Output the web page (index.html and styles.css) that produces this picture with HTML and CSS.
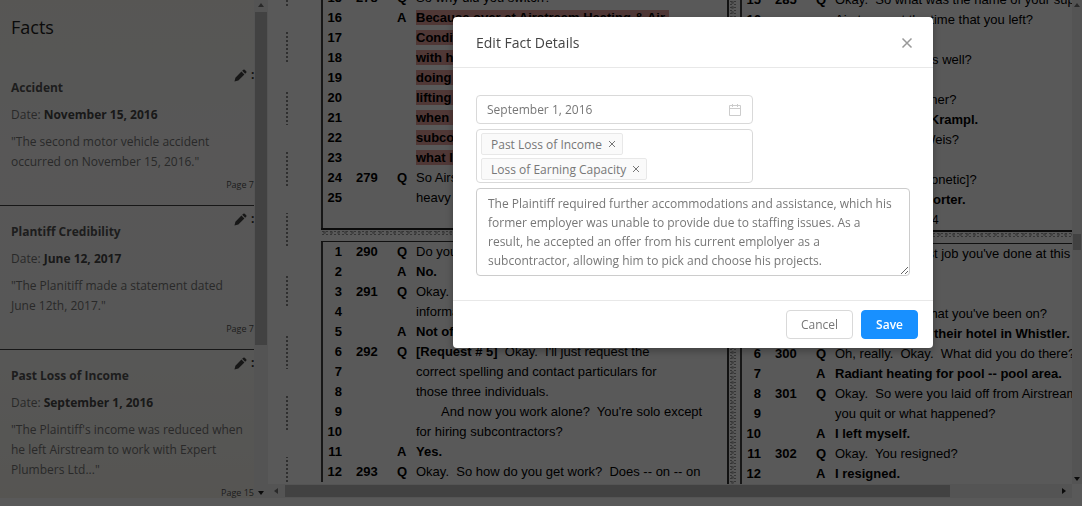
FILE: index.html
```
<!DOCTYPE html>
<html lang="en">

<head>
    <meta charset="UTF-8">
    <meta name="viewport" content="width=device-width, initial-scale=1.0">
    <title>Edit Fact Details</title>
    <link rel="stylesheet" href="styles.css">
</head>

<body>
    <svg class="sprite" aria-hidden="true">
        <symbol id="pencil" viewBox="0 0 14 14">
            <path d="M.5 13.500l1-4.200 6.500-6.500 3.200 3.200-6.500 6.500zM8.800 2l1.200-1.200q.8-.6 1.500 0l1.700 1.700q.6.8 0 1.500L12 5.200z" />
        </symbol>
    </svg>

    <div class="app">
        <!-- Facts list -->
        <aside class="sidebar">
            <h1>Facts</h1>
            <article class="fact">
                <div class="fact-actions">
                    <button aria-label="Edit fact"><svg><use href="#pencil" /></svg></button>
                    <span class="more">:</span>
                </div>
                <h2>Accident</h2>
                <p>Date: <b>November 15, 2016</b></p>
                <p class="quote">"The second motor vehicle accident occurred on November 15, 2016."</p>
                <div class="page-ref">Page 7</div>
            </article>
            <article class="fact">
                <div class="fact-actions">
                    <button aria-label="Edit fact"><svg><use href="#pencil" /></svg></button>
                    <span class="more">:</span>
                </div>
                <h2>Plantiff Credibility</h2>
                <p>Date: <b>June 12, 2017</b></p>
                <p class="quote">"The Planitiff made a statement dated June 12th, 2017."</p>
                <div class="page-ref">Page 7</div>
            </article>
            <article class="fact">
                <div class="fact-actions">
                    <button aria-label="Edit fact"><svg><use href="#pencil" /></svg></button>
                    <span class="more">:</span>
                </div>
                <h2>Past Loss of Income</h2>
                <p>Date: <b>September 1, 2016</b></p>
                <p class="quote">"The Plaintiff's income was reduced when he left Airstream to work with Expert Plumbers Ltd..."</p>
                <div class="page-ref">Page 15</div>
            </article>
        </aside>
        <div class="scroll-y">
            <i class="arrow up"></i>
            <div class="thumb"></div>
            <i class="arrow down"></i>
        </div>

        <!-- Transcript -->
        <main class="viewer">
            <div class="scan">
                <div class="margin"></div>
                <div class="sheet sheet-left">
                    <div class="block-end">
                        <table class="block">
                            <tr><td>15</td><td>278</td><td>Q</td><td>So why did you switch?</td></tr>
                            <tr class="answer"><td>16</td><td></td><td>A</td><td><mark>Because over at Airstream Heating &amp; Air </mark></td></tr>
                            <tr class="answer"><td>17</td><td></td><td></td><td><mark>Conditioning I was working</mark></td></tr>
                            <tr class="answer"><td>18</td><td></td><td></td><td><mark>with heavy equipment and</mark></td></tr>
                            <tr class="answer"><td>19</td><td></td><td></td><td><mark>doing a lot of the heavy</mark></td></tr>
                            <tr class="answer"><td>20</td><td></td><td></td><td><mark>lifting on my own, and</mark></td></tr>
                            <tr class="answer"><td>21</td><td></td><td></td><td><mark>when I started to work as a</mark></td></tr>
                            <tr class="answer"><td>22</td><td></td><td></td><td><mark>subcontractor I could pick</mark></td></tr>
                            <tr class="answer"><td>23</td><td></td><td></td><td><mark>what I wanted to do.</mark></td></tr>
                            <tr><td>24</td><td>279</td><td>Q</td><td>So Airstream had you doing</td></tr>
                            <tr><td>25</td><td></td><td></td><td>heavy lifting?</td></tr>
                        </table>
                        <div class="folio"></div>
                    </div>
                    <div class="grit-row"></div>
                    <table class="block block-start">
                        <tr><td>1</td><td>290</td><td>Q</td><td>Do you know their names?</td></tr>
                        <tr class="answer"><td>2</td><td></td><td>A</td><td>No.</td></tr>
                        <tr><td>3</td><td>291</td><td>Q</td><td>Okay.  Do you have contact</td></tr>
                        <tr><td>4</td><td></td><td></td><td>information for them?</td></tr>
                        <tr class="answer"><td>5</td><td></td><td>A</td><td>Not offhand.</td></tr>
                        <tr><td>6</td><td>292</td><td>Q</td><td><b>[Request # 5]</b>  Okay.  I'll just request the</td></tr>
                        <tr><td>7</td><td></td><td></td><td>correct spelling and contact particulars for</td></tr>
                        <tr><td>8</td><td></td><td></td><td>those three individuals.</td></tr>
                        <tr><td>9</td><td></td><td></td><td class="indent">And now you work alone?  You're solo except</td></tr>
                        <tr><td>10</td><td></td><td></td><td>for hiring subcontractors?</td></tr>
                        <tr class="answer"><td>11</td><td></td><td>A</td><td>Yes.</td></tr>
                        <tr><td>12</td><td>293</td><td>Q</td><td>Okay.  So how do you get work?  Does -- on -- on</td></tr>
                    </table>
                </div>
                <div class="gutter"></div>
                <div class="sheet">
                    <div class="block-end">
                        <table class="block">
                            <tr><td>15</td><td>285</td><td>Q</td><td>Okay.  So what was the name of your supervisor</td></tr>
                            <tr><td>16</td><td></td><td></td><td>Airstream at the time that you left?</td></tr>
                            <tr class="answer"><td>17</td><td></td><td>A</td><td>Kevin.</td></tr>
                            <tr><td>18</td><td>286</td><td>Q</td><td>Was Bert there as well?</td></tr>
                            <tr class="answer"><td>19</td><td></td><td>A</td><td>Yes.</td></tr>
                            <tr><td>20</td><td>287</td><td>Q</td><td>Who was the owner?</td></tr>
                            <tr class="answer"><td>21</td><td></td><td>A</td><td>I think that's it, Krampl.</td></tr>
                            <tr><td>22</td><td>288</td><td>Q</td><td>And then Mark Weis?</td></tr>
                            <tr class="answer"><td>23</td><td></td><td>A</td><td>Yes.</td></tr>
                            <tr><td>24</td><td>289</td><td>Q</td><td>Andy Krampl [phonetic]?</td></tr>
                            <tr class="answer"><td>25</td><td></td><td>A</td><td>To the court reporter.</td></tr>
                        </table>
                        <div class="folio">64</div>
                    </div>
                    <div class="grit-row"></div>
                    <table class="block block-start">
                        <tr><td>1</td><td>298</td><td>Q</td><td>What was the last job you've done at this</td></tr>
                        <tr><td>2</td><td></td><td></td><td>point?</td></tr>
                        <tr class="answer"><td>3</td><td></td><td>A</td><td>Whistler.</td></tr>
                        <tr><td>4</td><td>299</td><td>Q</td><td>Is that a big job that you've been on?</td></tr>
                        <tr class="answer"><td>5</td><td></td><td>A</td><td>No, I was out at their hotel in Whistler.</td></tr>
                        <tr><td>6</td><td>300</td><td>Q</td><td>Oh, really.  Okay.  What did you do there?</td></tr>
                        <tr class="answer"><td>7</td><td></td><td>A</td><td>Radiant heating for pool -- pool area.</td></tr>
                        <tr><td>8</td><td>301</td><td>Q</td><td>Okay.  So were you laid off from Airstream</td></tr>
                        <tr><td>9</td><td></td><td></td><td>you quit or what happened?</td></tr>
                        <tr class="answer"><td>10</td><td></td><td>A</td><td>I left myself.</td></tr>
                        <tr><td>11</td><td>302</td><td>Q</td><td>Okay.  You resigned?</td></tr>
                        <tr class="answer"><td>12</td><td></td><td>A</td><td>I resigned.</td></tr>
                    </table>
                </div>
            </div>
            <div class="scroll-y scroll-doc">
                <i class="arrow up"></i>
                <div class="thumb"></div>
                <i class="arrow down"></i>
            </div>
            <div class="scroll-x">
                <i class="arrow left"></i>
                <div class="thumb"></div>
                <i class="arrow right"></i>
            </div>
        </main>
    </div>

    <!-- Modal -->
    <div class="mask">
        <form class="modal" role="dialog" aria-labelledby="modal-title">
            <header class="modal-header">
                <h3 id="modal-title">Edit Fact Details</h3>
                <button type="button" class="close" aria-label="Close">
                    <svg viewBox="0 0 12 12"><path d="M1.500 1.500l9 9M10.500 1.500l-9 9" /></svg>
                </button>
            </header>
            <div class="modal-body">
                <div class="date-field">
                    <input type="text" aria-label="Date" value="September 1, 2016">
                    <svg viewBox="0 0 12 12"><path d="M.5 1.500h11v10H.5zM.5 4.500h11M3.500 0v3M8.500 0v3" /></svg>
                </div>
                <div class="tags">
                    <span class="tag">Past Loss of Income
                        <button type="button" aria-label="Remove Past Loss of Income"><svg viewBox="0 0 8 8"><path d="M1 1l6 6M7 1L1 7" /></svg></button>
                    </span>
                    <span class="tag">Loss of Earning Capacity
                        <button type="button" aria-label="Remove Loss of Earning Capacity"><svg viewBox="0 0 8 8"><path d="M1 1l6 6M7 1L1 7" /></svg></button>
                    </span>
                </div>
                <textarea aria-label="Description">The Plaintiff required further accommodations and assistance, which his former employer was unable to provide due to staffing issues. As a result, he accepted an offer from his current emplolyer as a subcontractor, allowing him to pick and choose his projects.</textarea>
            </div>
            <footer class="modal-footer">
                <button type="button" class="btn">Cancel</button>
                <button type="submit" class="btn btn-primary">Save</button>
            </footer>
        </form>
    </div>
</body>

</html>
```
FILE: styles.css
```
* {
    box-sizing: border-box;
}

body {
    margin: 0;
    height: 100vh;
    overflow: hidden;
    background: #fff;
    font-family: "Open Sans", "Noto Sans", sans-serif;
    font-size: 12px;
}

h1, h2, h3, p {
    margin: 0;
}

button {
    font: inherit;
    cursor: pointer;
}

.sprite {
    display: none;
}

.app {
    display: grid;
    grid-template-columns: 254px 14px 1fr;
    height: 100vh;
    padding-bottom: 8px;
}

/* Sidebar */
.sidebar {
    overflow: hidden;
    background: linear-gradient(#f8f7f1, #fbfafa 30%, #fafaf8 65%, #f5f3ec);
    color: #777;
}

.sidebar h1 {
    height: 62px;
    padding: 14px 11px;
    font-size: 18px;
    font-weight: 400;
    line-height: 26px;
    color: #222;
}

.fact {
    position: relative;
    padding: 16px 0 12px 11px;
    border-bottom: 1px solid #444;
    line-height: 20px;
}

.fact h2 {
    font-size: 12px;
    font-weight: 700;
    line-height: 20px;
    color: #555;
}

.fact p {
    margin-top: 7px;
}

.fact .quote {
    padding-right: 8px;
}

.fact b {
    color: #484848;
}

.page-ref {
    margin-top: 5px;
    font-size: 9px;
    line-height: 16px;
    text-align: right;
    color: #555;
}

.fact-actions {
    position: absolute;
    top: 6px;
    right: 0;
    display: flex;
    gap: 4px;
    align-items: center;
    color: #333;
    line-height: 14px;
}

.fact-actions button {
    display: flex;
    padding: 0;
    border: 0;
    background: none;
}

.fact-actions svg {
    width: 13px;
    height: 13px;
    fill: #444;
}

.more {
    width: 3px;
    font-weight: 700;
}

/* Scrollbars */
.scroll-y,
.scroll-x {
    display: flex;
    justify-content: space-between;
    align-items: center;
    background: #f1f1f1;
}

.scroll-y {
    flex-direction: column;
    padding: 3px 1px;
}

.scroll-y .thumb {
    width: 100%;
    height: 333px;
    margin: 5px 0 auto;
    background: #bcbcbc;
}

.scroll-y.scroll-doc .thumb {
    height: 16px;
    margin: auto 0;
}

.scroll-x {
    grid-column: 1;
    padding: 0 6px;
}

.scroll-x .thumb {
    flex: 0 0 84%;
    height: 12px;
    margin: 0 auto 0 7px;
    background: #bcbcbc;
}

.arrow {
    border: 3px solid transparent;
}

.arrow.up {
    border-top: 0;
    border-bottom: 4px solid #777;
}

.arrow.down {
    border-bottom: 0;
    border-top: 4px solid #222;
}

.arrow.left {
    border-left: 0;
    border-right: 4px solid #777;
}

.arrow.right {
    border-right: 0;
    border-left: 4px solid #222;
}

/* Transcript */
.viewer {
    display: grid;
    grid-template-columns: 1fr 10px;
    grid-template-rows: 1fr 14px;
    min-width: 0;
    min-height: 0;
    overflow: hidden;
}

.scan {
    display: flex;
    min-width: 0;
    min-height: 0;
    overflow: hidden;
    font-family: "Liberation Sans", Arial, sans-serif;
    color: #000;
}

.margin {
    flex: 0 0 53px;
    background:
        repeating-linear-gradient(transparent 0 34px, #fff 34px 61px) 0 30px,
        repeating-linear-gradient(#888 0 2px, transparent 2px 4px) 18px 0 / 2px 100% no-repeat;
}

.sheet {
    display: flex;
    flex: 0 0 406px;
    flex-direction: column;
    justify-content: flex-end;
}

.sheet-left {
    padding-bottom: 2px;
}

.block {
    width: 100%;
    border-spacing: 0;
    table-layout: fixed;
    font-size: 13px;
    line-height: 20px;
}

.block td {
    height: 20px;
    padding: 0;
    white-space: pre;
}

.block td:nth-child(1) {
    width: 21px;
    font-weight: 700;
    text-align: right;
}

.block td:nth-child(2) {
    width: 55px;
    padding-left: 14px;
    font-weight: 700;
}

.block td:nth-child(3) {
    width: 19px;
    font-weight: 700;
}

.block .indent {
    padding-left: 25px;
}

.answer {
    font-weight: 700;
}

mark {
    background: #e6a09c;
    color: inherit;
}

.block-end,
.block-start {
    box-shadow: inset 2px 0 #444;
}

.block-end {
    border-bottom: 2px solid #222;
}

.block-start {
    border-top: 1px solid #333;
}

.folio {
    height: 20px;
    padding-right: 22px;
    font-size: 12px;
    line-height: 20px;
    text-align: center;
}

.grit-row,
.gutter {
    background-image:
        radial-gradient(#999 30%, transparent 40%),
        radial-gradient(#bbb 30%, transparent 40%);
    background-size: 4px 3px, 7px 5px;
}

.grit-row {
    flex: 0 0 6px;
    margin-bottom: 5px;
}

.gutter {
    flex: 0 0 13px;
    border-left: 2px solid #333;
    border-right: 4px solid #fff;
}

/* Modal */
.mask {
    position: fixed;
    inset: 0;
    display: flex;
    justify-content: flex-end;
    align-items: flex-start;
    padding: 17px 149px 0 0;
    background: rgba(0, 0, 0, 0.65);
}

.modal {
    width: 480px;
    border-radius: 4px;
    background: #fff;
    box-shadow: 0 3px 8px rgba(0, 0, 0, 0.3);
    color: #777;
}

.modal-header {
    display: flex;
    justify-content: space-between;
    align-items: center;
    padding: 15px 20px 14px 23px;
    border-bottom: 1px solid #e8e8e8;
}

.modal-header h3 {
    font-size: 14px;
    font-weight: 400;
    line-height: 21px;
    color: #444;
}

.close {
    display: flex;
    padding: 0;
    border: 0;
    background: none;
}

.close svg {
    width: 12px;
    height: 12px;
    stroke: #999;
    stroke-width: 1.5;
}

.modal-body {
    display: flex;
    flex-direction: column;
    align-items: flex-start;
    gap: 5px;
    padding: 27px 23px 24px;
}

.date-field,
.tags {
    display: flex;
    width: 277px;
    border: 1px solid #d9d9d9;
    border-radius: 4px;
}

.date-field {
    align-items: center;
    height: 29px;
    padding: 0 11px 0 10px;
}

.date-field input {
    flex: 1;
    min-width: 0;
    padding: 0;
    border: 0;
    outline: 0;
    font: inherit;
    color: inherit;
}

.date-field svg {
    width: 12px;
    height: 12px;
    fill: none;
    stroke: #ccc;
}

.tags {
    flex-wrap: wrap;
    gap: 3px;
    padding: 3px 4px 2px;
}

.tag {
    display: flex;
    align-items: center;
    gap: 6px;
    height: 22px;
    padding: 0 6px 0 9px;
    border: 1px solid #e8e8e8;
    border-radius: 2px;
    background: #fafafa;
}

.tag button {
    display: flex;
    padding: 0;
    border: 0;
    background: none;
}

.tag svg {
    width: 8px;
    height: 8px;
    stroke: #777;
}

textarea {
    width: 100%;
    height: 88px;
    padding: 5px 11px;
    border: 1px solid #ccc;
    border-radius: 4px;
    outline: 0;
    overflow: hidden;
    font: inherit;
    line-height: 19px;
    color: inherit;
}

.modal-footer {
    display: flex;
    justify-content: flex-end;
    gap: 8px;
    padding: 9px 15px;
    border-top: 1px solid #e8e8e8;
}

.btn {
    height: 29px;
    padding: 0 14px;
    border: 1px solid #d9d9d9;
    border-radius: 4px;
    background: #fff;
    color: inherit;
}

.btn-primary {
    border-color: #1890ff;
    background: #1890ff;
    color: #fff;
    font-weight: 600;
}
```
